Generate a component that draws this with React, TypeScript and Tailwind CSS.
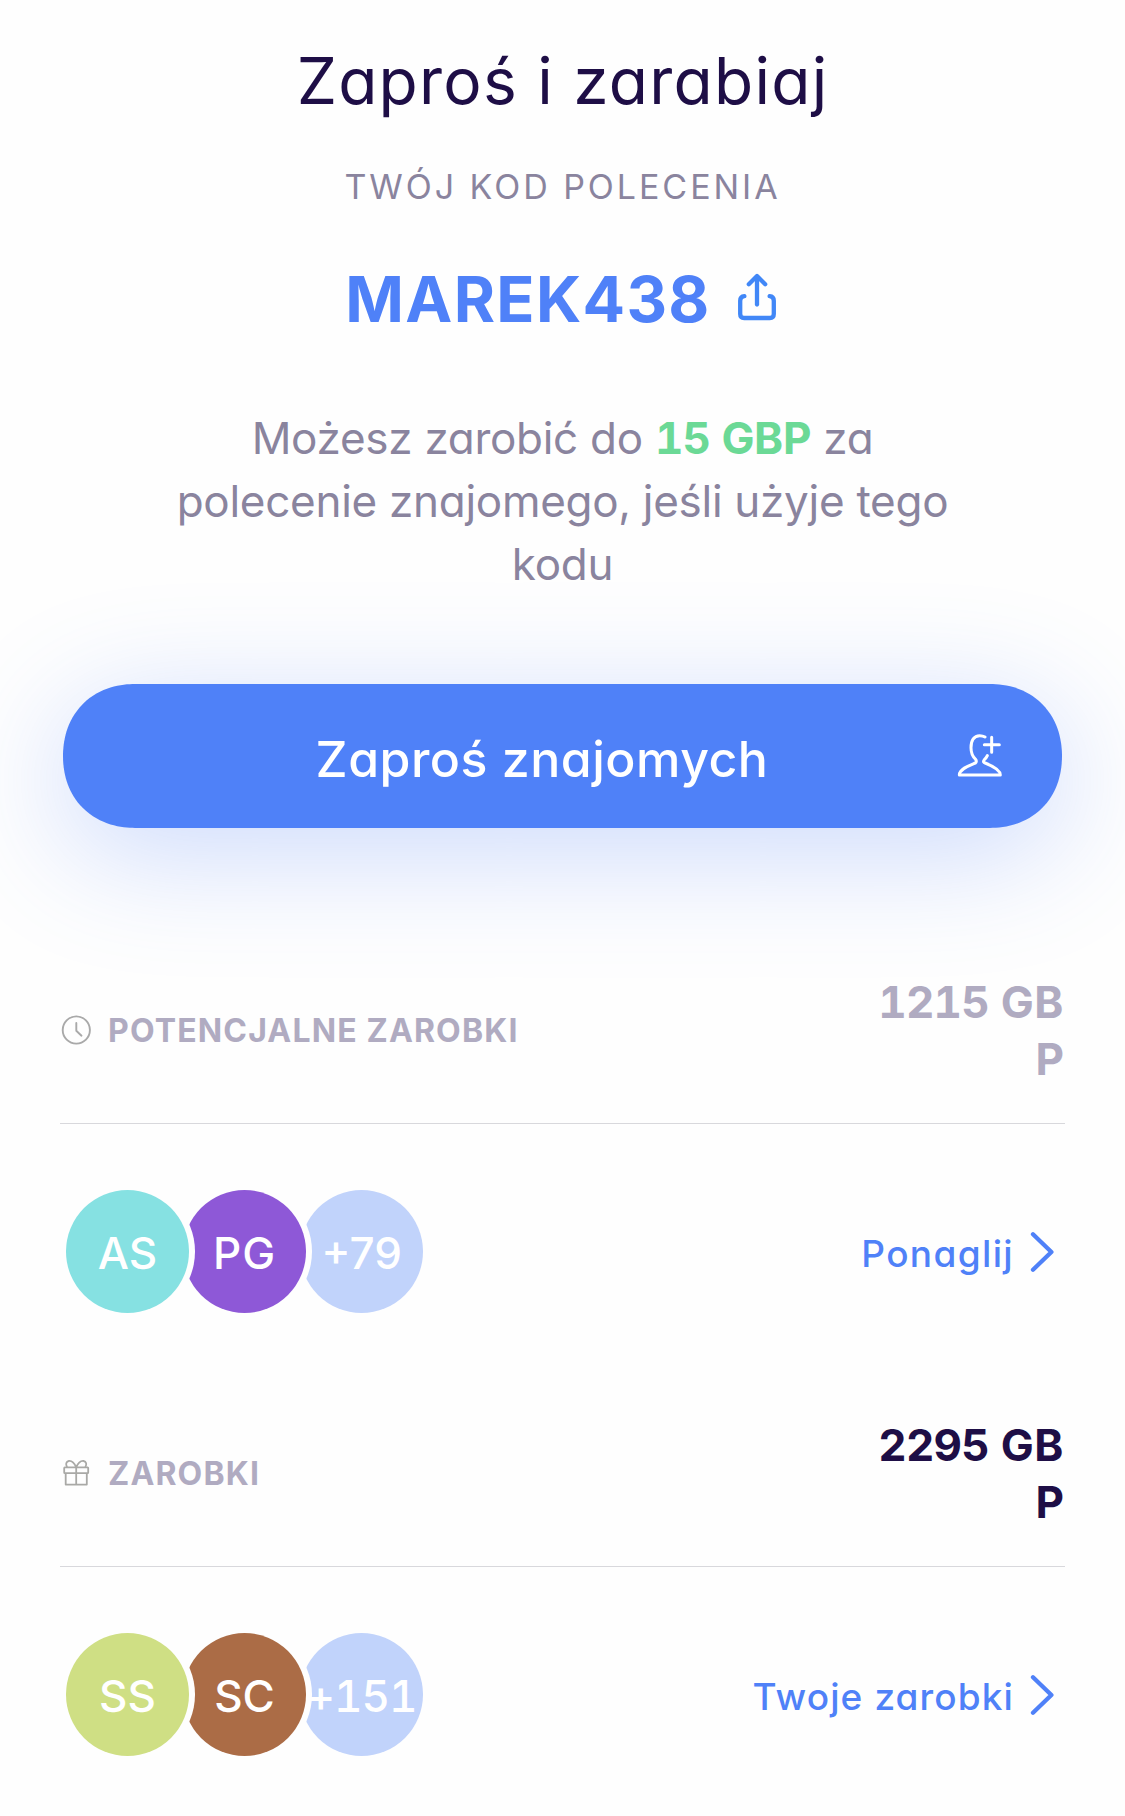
import type { ReactNode } from "react";

function ShareIcon() {
  return (
    <svg className="-mt-[5px] h-[48px] w-[40px]" viewBox="0 0 40 48" fill="none" stroke="#4187f7" strokeWidth="4.3" strokeLinecap="round" strokeLinejoin="round">
      <path d="M20 31.5V4" />
      <path d="M11.8 11.2 20 3l8.2 8.2" />
      <path d="M7.4 23.2C4.5 23.4 3.2 25 3.2 27.8V41c0 2.7 1.3 4 4 4h25.6c2.7 0 4-1.3 4-4V27.8c0-2.8-1.3-4.4-4.2-4.6" />
    </svg>
  );
}

function AddPersonIcon() {
  return (
    <svg className="-mt-px h-[45px] w-[46px]" viewBox="170 98 138 135" fill="none" stroke="#fff" strokeWidth="9" strokeLinecap="round" strokeLinejoin="round">
      <path d="M254 110C249 107 244 106 238 106C221 106 212 120 212 142C212 158 217 168 225 176Q231 183 225 188C211 194 177 205 177 224H300C300 205 267 193 252 187Q247 184 252 178Q258 173 261 166" />
      <path d="M252 133H297M274 111V156" />
    </svg>
  );
}

function ClockIcon() {
  return (
    <svg className="-mt-[2px] h-[32px] w-[32px]" viewBox="-16.3 -16 32 32" fill="none" stroke="#a9a9a9" strokeWidth="1.9" strokeLinecap="round" strokeLinejoin="round">
      <circle r="13.6" />
      <path d="M0 -7V.8L5.2 5.7" />
    </svg>
  );
}

function GiftIcon() {
  return (
    <svg className="-mt-[2px] h-[32px] w-[32px]" viewBox="-16 -16 32 32" fill="none" stroke="#a9a9a6" strokeWidth="1.8" strokeLinejoin="round">
      <rect x="-11.8" y="-5.6" width="24" height="5.8" rx="0.6" />
      <path d="M-10.3 .2V11.6H10.8V.2M.2 -5.6V11.6" />
      <path d="M.2 -5.6C-1.5 -9.5 -4.5 -12.3 -7.2 -12C-9.8 -11.6 -10.8 -8.2 -8.8 -5.8M.2 -5.6C1.9 -9.5 4.9 -12.3 7.6 -12C10.2 -11.6 11.2 -8.2 9.2 -5.8" />
    </svg>
  );
}

function Chevron() {
  return (
    <svg className="h-[40px] w-[24px]" viewBox="0 0 24 40" fill="none" stroke="#4f81f8" strokeWidth="4.3" strokeLinecap="round" strokeLinejoin="round">
      <path d="M3 2.3 21.4 20 3 37.7" />
    </svg>
  );
}

type AvatarData = { text: string; style: string };

function Earnings(props: {
  icon: ReactNode;
  label: string;
  amount: string;
  amountStyle: string;
  avatars: AvatarData[];
  link: string;
  linkStyle: string;
}) {
  return (
    <section className="pr-[60px] pl-[60px]">
      <div className="flex h-[114px] items-center justify-between">
        <div className="flex items-center gap-[16px]">
          {props.icon}
          <h2 className="text-[32px] leading-[40px] font-bold tracking-[1.15px] whitespace-nowrap text-[#b0abc1]">{props.label}</h2>
        </div>
        <div className={`pr-px text-right text-[44px] leading-[57px] font-bold whitespace-nowrap tabular-nums ${props.amountStyle}`}>
          <span className="tracking-[-0.8px]">{props.amount}</span> <span className="tracking-[0.6px]">GB</span>
          <br />P
        </div>
      </div>
      <div className="mt-[35px] h-px bg-[#d8d8dc]" />
      <div className="mt-[66px] flex items-center justify-between">
        <div className="isolate ml-[6px] flex -space-x-[6px]">
          {props.avatars.map((a) => (
            <div
              key={a.text}
              className={`relative flex size-[123px] items-center justify-center rounded-full pt-[3px] text-[44px] leading-none font-[550] whitespace-nowrap text-white ring-[6px] ring-[#fefefe] ${a.style}`}
            >
              {a.text}
            </div>
          ))}
        </div>
        <a className="mr-[11px] flex items-center gap-[16px] text-[#4f81f8]">
          <span className={`pt-[5px] text-[37px] leading-[44px] font-medium whitespace-nowrap ${props.linkStyle}`}>{props.link}</span>
          <Chevron />
        </a>
      </div>
    </section>
  );
}

export default function App() {
  return (
    <main
      className="h-[1816px] w-[1125px] overflow-hidden bg-[#fefefe] pt-[41px]"
      style={{ fontFamily: 'Inter, "Liberation Sans", sans-serif', fontFeatureSettings: '"cv11"' }}
    >
      <h1 className="text-center text-[64px] leading-[80px] font-normal tracking-[1.25px] text-[#1e0e46]">Zaproś i zarabiaj</h1>
      <p className="mt-[46px] text-center text-[34px] leading-[40px] font-normal tracking-[2.95px] text-[#8a849e]">TWÓJ KOD POLECENIA</p>
      <div className="mt-[52px] mr-[3px] flex h-[80px] items-center justify-center gap-[26px]">
        <span className="text-[63px] leading-[80px] font-bold tracking-[1.3px] text-[#4f81f8]">MAREK438</span>
        <ShareIcon />
      </div>
      <p className="mt-[68px] text-center text-[44px] leading-[63px] font-normal tracking-[-0.28px] text-[#8a849e]">
        Możesz zarobić do{" "}
        <b className="font-bold text-[#6bd996] tabular-nums">
          <span className="tracking-[-1px]">15</span> GBP
        </b>{" "}
        za
        <br />
        polecenie znajomego, jeśli użyje tego
        <br />
        kodu
      </p>
      <button className="mt-[88px] ml-[63px] flex h-[144px] w-[999px] items-center rounded-[72px] bg-[#4f81f8] pr-[59px] pl-[64px] text-white shadow-[0_24px_120px_rgba(80,128,247,0.29)] [corner-shape:superellipse(1.1)]">
        <span className="flex-1 pt-[5px] text-center text-[50px] leading-[60px] font-medium tracking-[0.5px]">Zaproś znajomych</span>
        <AddPersonIcon />
      </button>
      <div className="mt-[146px] flex flex-col gap-[104px]">
        <Earnings
          icon={<ClockIcon />}
          label="POTENCJALNE ZAROBKI"
          amount="1215"
          amountStyle="text-[#b0abc1]"
          avatars={[
            { text: "AS", style: "z-30 bg-[#86e1e2]" },
            { text: "PG", style: "z-20 bg-[#8e58d7] tracking-[1px]" },
            { text: "+79", style: "z-10 bg-[#c1d3fb]" },
          ]}
          link="Ponaglij"
          linkStyle="tracking-[1.35px]"
        />
        <Earnings
          icon={<GiftIcon />}
          label="ZAROBKI"
          amount="2295"
          amountStyle="text-[#1e0e46]"
          avatars={[
            { text: "SS", style: "z-30 bg-[#cfdf84]" },
            { text: "SC", style: "z-20 bg-[#ab6c46]" },
            { text: "+151", style: "z-10 bg-[#c1d3fb] tracking-[-1px] tabular-nums" },
          ]}
          link="Twoje zarobki"
          linkStyle="tracking-[1.11px]"
        />
      </div>
    </main>
  );
}
